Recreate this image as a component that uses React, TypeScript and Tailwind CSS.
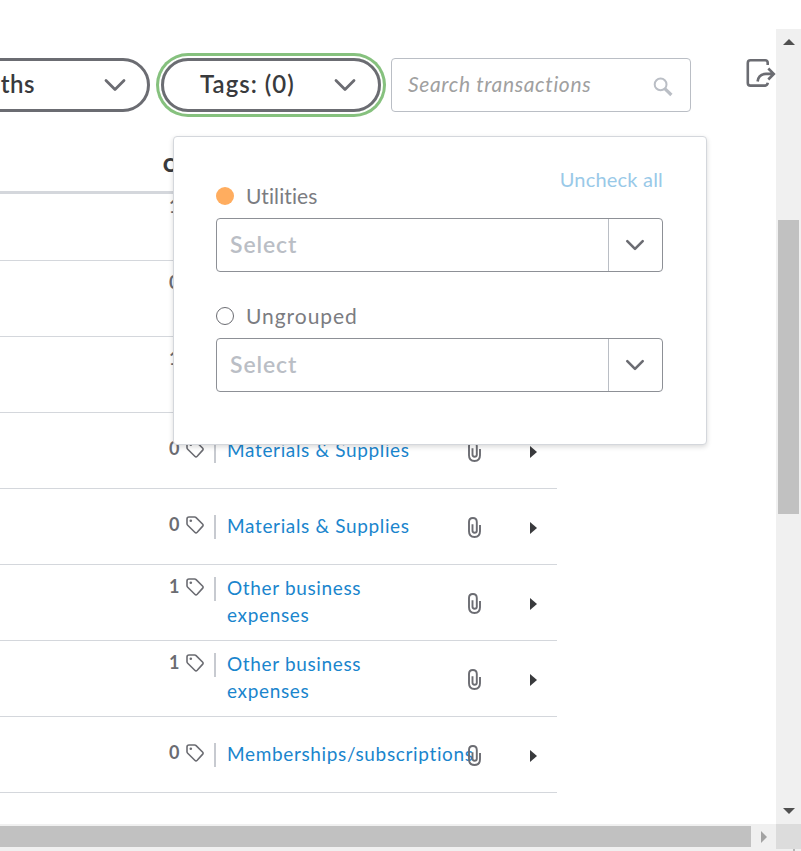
import clsx from 'clsx';

type Row = { tags: number; category: string; first?: boolean };

const rows: Row[] = [
  { tags: 1, category: 'Other business expenses', first: true },
  { tags: 0, category: 'Other business expenses' },
  { tags: 1, category: 'Other business expenses' },
  { tags: 0, category: 'Materials & Supplies' },
  { tags: 0, category: 'Materials & Supplies' },
  { tags: 1, category: 'Other business expenses' },
  { tags: 1, category: 'Other business expenses' },
  { tags: 0, category: 'Memberships/subscriptions' },
];

function Chevron({ className, strokeWidth }: { className: string; strokeWidth: number }) {
  return (
    <svg viewBox="0 0 22 14" fill="none" className={className}>
      <path
        d="M2 2.5L11 11.5L20 2.5"
        stroke="#6b6c72"
        strokeWidth={strokeWidth}
        strokeLinecap="round"
        strokeLinejoin="round"
      />
    </svg>
  );
}

function TagIcon() {
  return (
    <svg viewBox="0 0 18 18" fill="none" className="size-[18px] shrink-0">
      <path
        d="M1 3Q1 1 3 1L8.6 1Q9.5 1 10.1 1.6L16.5 8Q17.7 9.2 16.5 10.4L11.2 16.2Q10 17.4 8.8 16.2L1.7 9.2Q1 8.5 1 7.7Z"
        stroke="#6b6c72"
        strokeWidth="1.6"
        strokeLinejoin="round"
      />
      <circle cx="4.8" cy="4.8" r="1.3" fill="#6b6c72" />
    </svg>
  );
}

function ClipIcon() {
  return (
    <svg viewBox="0 0 13 21" fill="none" className="mt-0.5 h-[21px] w-[13px]">
      <path
        d="M4.5 7.2V13.5Q4.5 15.7 6.6 15.7Q8.8 15.7 8.8 13.7V5Q8.8 1 4.9 1Q1 1 1 5V14.3Q1 20 6.5 20Q12 20 12 14.3V8"
        stroke="#6b6c72"
        strokeWidth="1.9"
      />
    </svg>
  );
}

function ExportIcon() {
  return (
    <svg viewBox="0 0 30 30" fill="none" className="h-[30px] w-[30px]">
      <path
        d="M21.7 7V4.8Q21.7 2.2 19.1 2.2H4.5Q1.8 2.2 1.8 4.9V25Q1.8 27.6 4.5 27.6H19.3Q21.2 27.6 21.8 24.8"
        stroke="#6b6c72"
        strokeWidth="2.6"
      />
      <path d="M11.6 23.5Q12.5 16 20 15.9H27.5M22.3 10.5L27.8 15.9L22.3 21.5" stroke="#6b6c72" strokeWidth="2.6" />
    </svg>
  );
}

function SearchIcon() {
  return (
    <svg viewBox="0 0 20 20" fill="none" className="mt-1 size-5" stroke="#babec5">
      <circle cx="7.6" cy="7.4" r="5.9" strokeWidth="2" />
      <path d="M11.8 11.6L18.4 18" strokeWidth="3.2" />
    </svg>
  );
}

function Toolbar() {
  return (
    <div className="flex h-[54px] text-2xl font-semibold text-[#393a3d]">
      <button className="-ml-[150px] flex w-[300px] shrink-0 items-center justify-end rounded-full border-3 border-[#6b6c72] pr-[21px]">
        <span className="pb-0.5 tracking-[0.5px]">Last 12 months</span>
        <Chevron className="ml-[69px] h-3.5 w-[22px]" strokeWidth={2.8} />
      </button>
      <button className="ml-[11px] flex w-[220px] shrink-0 items-center justify-between rounded-full border-3 border-[#6b6c72] pl-9 pr-[22px] ring-3 ring-[#86c17e] ring-offset-2">
        <span className="pb-0.5 tracking-[1px]">Tags: (0)</span>
        <Chevron className="h-3.5 w-[22px]" strokeWidth={2.8} />
      </button>
      <div className="ml-2.5 flex w-[300px] shrink-0 items-center justify-between rounded border border-[#babec5] pl-4 pr-[17px]">
        <span className="pb-0.5 text-[21px] font-normal tracking-[0.65px] text-[#a0a0a0] italic">
          Search transactions
        </span>
        <SearchIcon />
      </div>
      <div className="ml-[55px]">
        <ExportIcon />
      </div>
    </div>
  );
}

function TransactionRow({ tags, category, first }: Row) {
  return (
    <div
      className={clsx('flex h-[76px] items-center border-b border-[#d4d7dc] pl-[169px]', first && '-mt-[9px]')}
    >
      <div className="flex w-[299px] shrink-0 items-start">
        <span className="w-[17px] text-lg leading-[22px] font-bold text-[#6b6c72]">{tags}</span>
        <div className="pt-[3px]">
          <TagIcon />
        </div>
        <div className="mt-0.5 ml-2.5 h-6 w-0.5 bg-[#c7cad0]" />
        <a className="-mt-px mb-[1.2px] ml-[11px] w-[190px] text-[19px] leading-[27px] tracking-[0.65px] text-[#1a85cd]">
          {category}
        </a>
      </div>
      <ClipIcon />
      <div className="mt-0.5 ml-[49px] border-y-6 border-l-7 border-y-transparent border-l-[#393a3d]" />
    </div>
  );
}

function TransactionTable() {
  return (
    <div className="mt-[25px] w-[557px]">
      <div className="flex h-[57px] items-center border-b-3 border-[#d4d7dc] pt-0.5 pl-[163px] text-[19px] font-extrabold text-[#393a3d]">
        CATEGORY
      </div>
      {rows.map((row, i) => (
        <TransactionRow key={i} {...row} />
      ))}
    </div>
  );
}

function TagGroup({ name, dot, nameClass }: { name: string; dot: string; nameClass: string }) {
  return (
    <div className="h-[120px]">
      <div className="flex h-[38px] items-center gap-3">
        <span className={clsx('size-[18px] rounded-full', dot)} />
        <span className={clsx('text-[21px] text-[#7b7c81]', nameClass)}>{name}</span>
      </div>
      <div className="mt-[3px] flex h-[54px] rounded border border-[#8d9096]">
        <div className="flex flex-1 items-center pb-px pl-[13px] text-[23px] font-semibold tracking-[0.9px] text-[#babec5]">
          Select
        </div>
        <div className="flex w-[54px] items-center justify-center border-l border-[#babec5] pr-0.5">
          <Chevron className="h-3 w-5" strokeWidth={3} />
        </div>
      </div>
    </div>
  );
}

function TagsMenu() {
  return (
    <div className="absolute top-[136px] left-[173px] h-[309px] w-[534px] rounded border border-[#d4d7dc] bg-white pt-[40px] pr-[43px] pl-[42px] shadow-[0_2px_5px_rgba(0,0,0,0.15)]">
      <button className="absolute top-[28px] right-[43px] text-xl leading-7 tracking-[0.2px] text-[#99c9e8]">
        Uncheck all
      </button>
      <TagGroup name="Utilities" dot="bg-[#ffad5f]" nameClass="tracking-[0.1px]" />
      <TagGroup name="Ungrouped" dot="border border-[#6b6c72]" nameClass="tracking-[0.95px]" />
    </div>
  );
}

function VerticalScrollbar() {
  return (
    <div className="mt-[29px] flex w-[25px] shrink-0 flex-col items-center bg-[#f0f0f0]">
      <div className="mt-2.5 border-x-6 border-b-6 border-x-transparent border-b-[#505050]" />
      <div className="mt-[175px] h-[294px] w-[21px] bg-[#c1c1c1]" />
      <div className="mt-auto mb-2.5 border-x-6 border-t-6 border-x-transparent border-t-[#505050]" />
    </div>
  );
}

function HorizontalScrollbar() {
  return (
    <div className="flex h-[25px] items-center bg-[#f0f0f0]">
      <div className="h-[21px] w-[751px] bg-[#c1c1c1]" />
      <div className="ml-2.5 border-y-6 border-l-6 border-y-transparent border-l-[#a3a3a3]" />
      <div className="ml-auto h-full w-[25px] bg-[#dcdcdc]" />
    </div>
  );
}

export default function App() {
  return (
    <div className="h-[851px] w-[801px] overflow-hidden bg-white font-['Lato','Open_Sans',sans-serif]">
      <div className="flex h-[824px]">
        <main className="relative w-[776px] shrink-0 overflow-hidden pt-[58px]">
          <Toolbar />
          <TransactionTable />
          <TagsMenu />
        </main>
        <VerticalScrollbar />
      </div>
      <HorizontalScrollbar />
      <div className="flex h-0.5 justify-end bg-[#f0f0f0] pr-1.5">
        <div className="w-0.5 bg-[#b5b5b5]" />
      </div>
    </div>
  );
}
